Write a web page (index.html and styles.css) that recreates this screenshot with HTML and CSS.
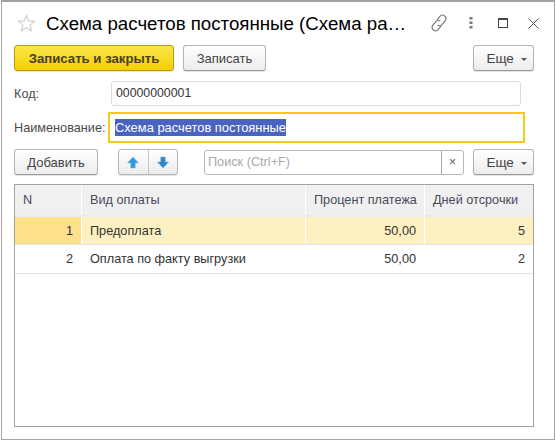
FILE: index.html
```html
<!DOCTYPE html>
<html lang="ru">
<head>
    <meta charset="UTF-8">
    <title>Схема расчетов постоянные</title>
    <link rel="stylesheet" href="styles.css">
</head>
<body>
<div class="window">
    <!-- заголовок -->
    <div class="title-bar">
        <svg class="star" width="19" height="19" viewBox="0 0 20 20"><path d="M10 1.500l2.400 5.700 6.100.5-4.700 4 1.500 6-5.300-3.300-5.300 3.300 1.500-6-4.700-4 6.100-.5z" fill="#fff" stroke="#ced2d6" stroke-width="1.200"/></svg>
        <span class="title">Схема расчетов постоянные (Схема ра…</span>
        <div class="title-icons">
            <svg width="18" height="18" viewBox="2 2 14 14" fill="none" stroke="#777" stroke-width=".9"><path d="M7.500 6.500l2-2.500c1-1.200 2.700-1.400 3.800-.5s1.300 2.600.4 3.800l-2.200 2.700c-1 1.200-2.500 1.300-3.500.5"/><path d="M10.500 11.500l-2 2.500c-1 1.200-2.700 1.400-3.800.5s-1.300-2.600-.4-3.800l2.200-2.700c1-1.200 2.500-1.300 3.500-.5"/></svg>
            <svg class="icon-dots" width="4" height="12" viewBox="0 0 4 12" fill="#777"><rect x="0.500" y="0" width="3" height="2.500"/><rect x="0.500" y="4.500" width="3" height="2.500"/><rect x="0.500" y="9" width="3" height="2.500"/></svg>
            <span class="icon-max"></span>
            <svg width="11" height="11" viewBox="0 0 11 11" stroke="#555" stroke-width="1"><path d="M.5.500l10 10M10.500.500l-10 10"/></svg>
        </div>
    </div>

    <!-- команды формы -->
    <div class="toolbar">
        <button class="btn btn-main">Записать и закрыть</button>
        <button class="btn btn-save">Записать</button>
        <button class="btn btn-more">Еще <i class="caret"></i></button>
    </div>

    <div class="field-row">
        <label class="field-label">Код:</label>
        <div class="input">00000000001</div>
    </div>
    <div class="field-row field-row-active">
        <label class="field-label">Наименование:</label>
        <div class="input-active"><span class="selected">Схема расчетов постоянные</span></div>
    </div>

    <!-- команды таблицы -->
    <div class="toolbar table-toolbar">
        <button class="btn btn-add">Добавить</button>
        <div class="btn-group">
            <button class="btn-arrow">
                <svg width="12" height="13" viewBox="0.500 0.500 13 13"><path d="M7 1l6 6.500H9.500V13h-5V7.500H1z" fill="#2f9ad8" stroke="#7cc4ec" stroke-width=".6"/></svg>
            </button>
            <button class="btn-arrow">
                <svg width="12" height="13" viewBox="0.500 0.500 13 13"><path d="M7 13L1 6.500h3.500V1h5v5.500H13z" fill="#2f86c8" stroke="#7cb4dc" stroke-width=".6"/></svg>
            </button>
        </div>
        <div class="search">
            <span class="search-text">Поиск (Ctrl+F)</span>
            <span class="search-clear">×</span>
        </div>
        <button class="btn btn-more">Еще <i class="caret"></i></button>
    </div>

    <div class="table">
        <div class="row head">
            <div class="cell">N</div>
            <div class="cell">Вид оплаты</div>
            <div class="cell">Процент платежа</div>
            <div class="cell">Дней отсрочки</div>
        </div>
        <div class="row row-current">
            <div class="cell num cell-mark">1</div>
            <div class="cell">Предоплата</div>
            <div class="cell num">50,00</div>
            <div class="cell num">5</div>
        </div>
        <div class="row">
            <div class="cell num">2</div>
            <div class="cell">Оплата по факту выгрузки</div>
            <div class="cell num">50,00</div>
            <div class="cell num">2</div>
        </div>
    </div>
</div>
</body>
</html>
```
FILE: styles.css
```css
html, body {
    margin: 0;
    padding: 0;
    background-color: #ffffff;
}
body {
    font-family: "Liberation Sans", Arial, sans-serif;
    font-size: 12.7px;
    color: #333333;
}
.window {
    box-sizing: border-box;
    width: 554px;
    height: 440px;
    margin-left: 1px;
    padding: 0 20px 12px 12px;
    border: 1px solid #a3a3a3;
    border-top-width: 2px;
    display: flex;
    flex-direction: column;
}

/* заголовок */
.title-bar {
    display: flex;
    align-items: center;
    height: 42px;
    margin-right: -20px;
}
.star {
    flex: none;
    margin-left: 3px;
}
.title {
    font-size: 18.7px;
    color: #000000;
    margin-left: 10px;
    margin-top: 2px;
    white-space: nowrap;
}
.title-icons {
    display: flex;
    align-items: center;
    margin-left: auto;
    margin-right: 15px;
}
.title-icons svg {
    display: block;
}
.icon-dots {
    margin-left: 21px;
}
.icon-max {
    box-sizing: border-box;
    width: 10px;
    height: 10px;
    margin-left: 25px;
    margin-right: 20px;
    border: 1px solid #444444;
    border-top-width: 2px;
}

/* кнопки */
.toolbar {
    display: flex;
    align-items: center;
    height: 26px;
    margin-top: 1px;
}
.btn {
    box-sizing: border-box;
    height: 26px;
    padding: 0;
    border: 1px solid #b4b4b4;
    border-bottom-color: #9a9a9a;
    border-radius: 3px;
    background: linear-gradient(#ffffff, #ececec);
    font-family: inherit;
    font-size: 13px;
    color: #444444;
    box-shadow: 0 1px 1px rgba(0, 0, 0, 0.12);
}
.btn-main {
    width: 160px;
    border-color: #b59b14;
    background: linear-gradient(#fbe64a, #f3d000);
    font-size: 13.2px;
    font-weight: bold;
    color: #4a4020;
}
.btn-save {
    width: 83px;
    margin-left: 9px;
}
.btn-more {
    width: 61px;
    margin-left: auto;
    padding-left: 6px;
    font-size: 13.5px;
}
.btn-add {
    width: 84px;
}
.caret {
    display: inline-block;
    width: 0;
    height: 0;
    margin-left: 3px;
    vertical-align: 2px;
    border-left: 3px solid transparent;
    border-right: 3px solid transparent;
    border-top: 3px solid #555555;
}

/* поля */
.field-row {
    display: flex;
    align-items: center;
    height: 25px;
    margin-top: 10px;
}
.field-row-active {
    height: 31px;
    margin-top: 6px;
}
.field-label {
    width: 97px;
    flex: none;
    color: #4a4a4a;
}
.field-row-active .field-label {
    width: 94px;
}
.input {
    box-sizing: border-box;
    width: 410px;
    height: 25px;
    padding: 0 4px;
    line-height: 23px;
    border: 1px solid #dcdcdc;
    border-radius: 3px;
    color: #333333;
    font-size: 12.3px;
}
.input-active {
    box-sizing: border-box;
    width: 417px;
    height: 31px;
    padding: 5px 5px;
    border: 2px solid #f8c91c;
    line-height: 17px;
}
.selected {
    display: block;
    height: 17px;
    width: 171px;
    background-color: #4a63c0;
    color: #ffffff;
    font-size: 12.9px;
    white-space: nowrap;
}

/* таблица */
.table-toolbar {
    margin-top: 6px;
}
.btn-group {
    display: flex;
    box-sizing: border-box;
    width: 60px;
    height: 26px;
    margin-left: 20px;
    border: 1px solid #b4b4b4;
    border-radius: 3px;
    background: linear-gradient(#ffffff, #ececec);
    box-shadow: 0 1px 1px rgba(0, 0, 0, 0.12);
}
.btn-arrow {
    flex: 1;
    padding: 0;
    border: none;
    background: none;
    display: flex;
    align-items: center;
    justify-content: center;
}
.btn-arrow + .btn-arrow {
    border-left: 1px solid #c4c4c4;
}
.search {
    box-sizing: border-box;
    display: flex;
    align-items: center;
    width: 260px;
    height: 25px;
    margin-left: 26px;
    border: 1px solid #b8b8b8;
    border-radius: 3px;
}
.search-text {
    flex: 1;
    padding-left: 3px;
    line-height: 23px;
    color: #a8a8a8;
    border-right: 1px solid #a8a8a8;
}
.search-clear {
    width: 21px;
    text-align: center;
    color: #666666;
}
.table {
    box-sizing: border-box;
    flex: 1;
    margin-top: 9px;
    border: 1px solid #a3a3a3;
    color: #333333;
}
.row {
    display: grid;
    grid-template-columns: 67px 224px 119px 1fr;
    height: 28px;
    border-bottom: 1px solid #e4e4e4;
}
.row-current {
    height: 27px;
    background-color: #fdf1c2;
}
.head {
    height: 30px;
    border-bottom: 2px solid #ececec;
    color: #4a4a5a;
}
.head .cell {
    background-color: #f0f0f0;
}
.cell {
    box-sizing: border-box;
    display: flex;
    align-items: center;
    padding: 0 8px;
    border-right: 1px solid #ffffff;
    white-space: nowrap;
}
.cell:last-child {
    border-right: none;
}
.num {
    justify-content: flex-end;
}
.cell-mark {
    background-color: #fde08a;
}
```
